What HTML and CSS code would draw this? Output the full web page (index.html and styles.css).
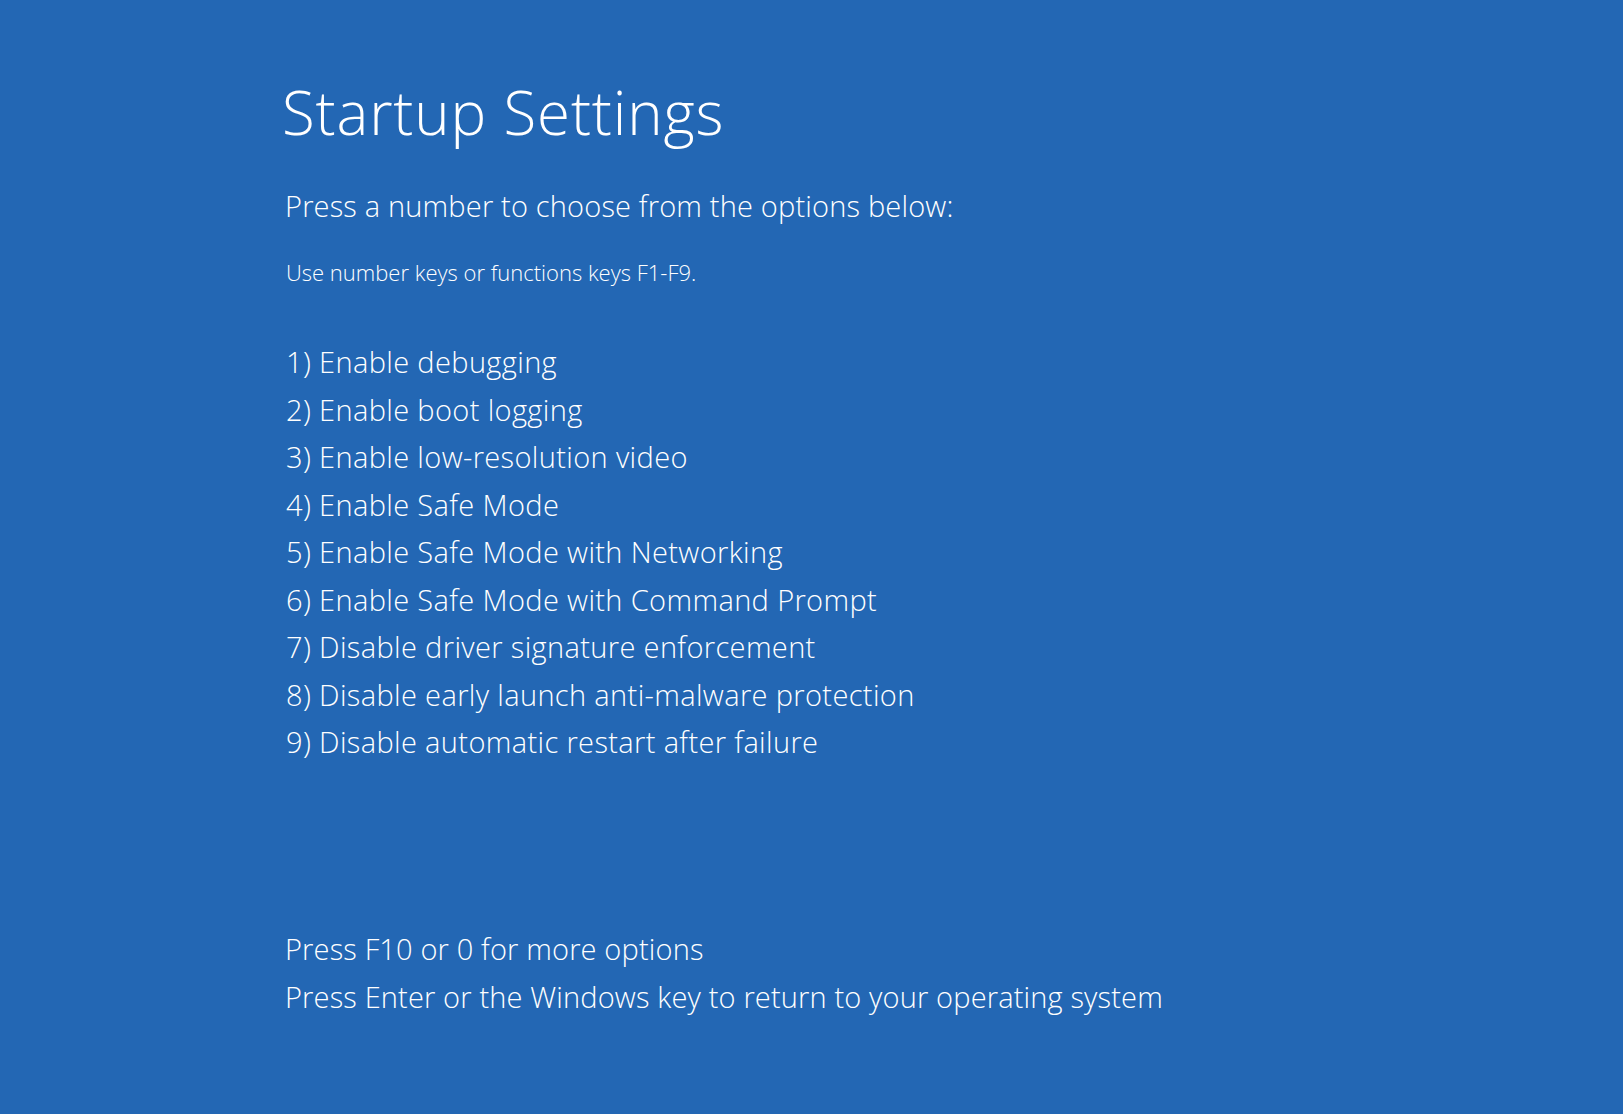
FILE: index.html
```html
<!DOCTYPE html>
<html lang="en">
<head>
<meta charset="utf-8">
<title>Startup Settings</title>
<link rel="stylesheet" href="styles.css">
</head>
<body>
<main class="screen">
  <h1 class="title">Startup Settings</h1>
  <p class="lead">Press a number to choose from the options below:</p>
  <p class="hint">Use number keys or functions keys F1-F9.</p>
  <ol class="options">
    <li>1) Enable debugging</li>
    <li>2) Enable boot logging</li>
    <li>3) Enable low-resolution video</li>
    <li>4) Enable Safe Mode</li>
    <li>5) Enable Safe Mode with Networking</li>
    <li>6) Enable Safe Mode with Command Prompt</li>
    <li>7) Disable driver signature enforcement</li>
    <li>8) Disable early launch anti-malware protection</li>
    <li>9) Disable automatic restart after failure</li>
  </ol>
  <div class="footer">
    <p>Press F10 or 0 for more options</p>
    <p>Press Enter or the Windows key to return to your operating system</p>
  </div>
</main>
</body>
</html>
```

FILE: styles.css
```css
html, body {
  margin: 0;
  padding: 0;
  height: 100%;
}
body {
  background: #2367b4;
  color: #ffffff;
  font-family: "Open Sans", "Noto Sans", "Liberation Sans", sans-serif;
  font-weight: 300;
}
.screen {
  display: flex;
  flex-direction: column;
  align-items: flex-start;
  padding: 76px 0 0 282px;
  box-sizing: border-box;
  min-height: 100%;
}
.title {
  margin: 0;
  font-size: 60px;
  line-height: 72px;
  font-weight: 300;
  letter-spacing: 0.85px;
}
.lead {
  margin: 38px 0 0 3px;
  font-size: 29px;
  line-height: 40px;
  letter-spacing: 0.17px;
}
.hint {
  margin: 31px 0 0 4px;
  font-size: 22px;
  line-height: 30px;
}
.options {
  list-style: none;
  margin: 51px 0 0 4px;
  padding: 0;
  font-size: 29px;
  line-height: 47.5px;
  letter-spacing: 0.36px;
}
.footer {
  margin: 159px 0 0 3px;
  font-size: 29px;
  line-height: 48px;
  letter-spacing: 0.15px;
}
.footer p {
  margin: 0;
}
```
